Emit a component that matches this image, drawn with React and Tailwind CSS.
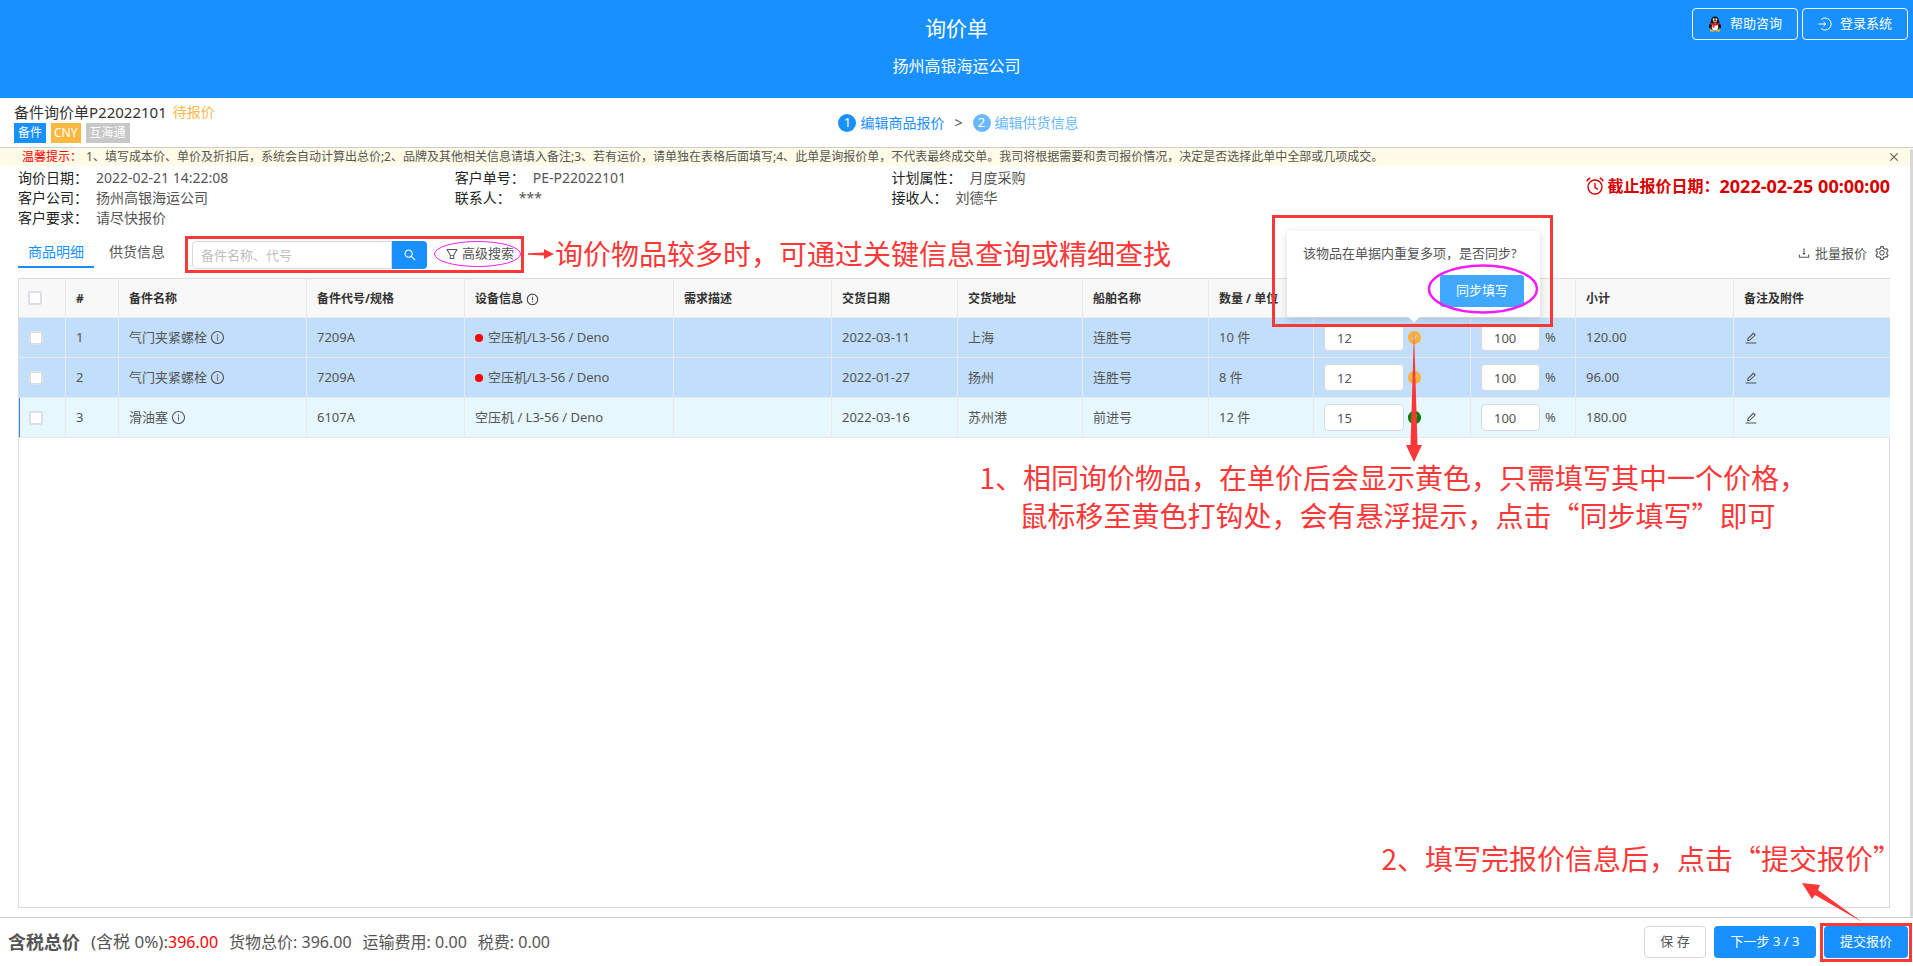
import React from "react";
import {
  AiOutlineSearch, AiOutlineFilter, AiOutlineSetting, AiOutlineEdit, AiOutlineInfoCircle,
  AiOutlineExclamationCircle, AiFillCheckCircle, AiOutlineDownload, AiOutlineClose,
} from "react-icons/ai";

const BODY_FONT = "font-['Noto_Sans','Noto_Sans_CJK_SC',sans-serif]";
const NOTE = "pointer-events-none whitespace-nowrap font-['Noto_Sans_CJK_SC',sans-serif] text-[28px] leading-[38px] text-[#fb3838]";

const ROWS = [
  { name: "气门夹紧螺栓", code: "7209A", device: "空压机/L3-56 / Deno", dot: true, date: "2022-03-11", place: "上海", ship: "连胜号", qty: "10 件", price: "12", off: "100", sum: "120.00", same: true },
  { name: "气门夹紧螺栓", code: "7209A", device: "空压机/L3-56 / Deno", dot: true, date: "2022-01-27", place: "扬州", ship: "连胜号", qty: "8 件", price: "12", off: "100", sum: "96.00", same: true },
  { name: "滑油塞", code: "6107A", device: "空压机 / L3-56 / Deno", dot: false, date: "2022-03-16", place: "苏州港", ship: "前进号", qty: "12 件", price: "15", off: "100", sum: "180.00", same: false },
];

function Penguin() {
  return (
    <svg viewBox="0 0 28 32" className="h-4 w-3.5" aria-hidden="true">
      <ellipse cx="8.500" cy="29" rx="5" ry="2.500" fill="#f7b21b" />
      <ellipse cx="19.500" cy="29" rx="5" ry="2.500" fill="#f7b21b" />
      <path d="M14 1C8 1 6 6 6 11c-3 5-5 9-4 13 1 1 2 0 3-1 1 4 4 6 9 6s8-2 9-6c1 1 2 2 3 1 1-4-1-8-4-13 0-5-2-10-8-10z" fill="#111" />
      <ellipse cx="14" cy="22" rx="6.500" ry="7" fill="#fff" />
      <ellipse cx="11.300" cy="7" rx="1.800" ry="2.600" fill="#fff" />
      <ellipse cx="16.700" cy="7" rx="1.800" ry="2.600" fill="#fff" />
      <ellipse cx="14" cy="11.500" rx="4.500" ry="1.500" fill="#f7b21b" />
      <path d="M5 13c5 3 13 3 18 0l1 3c-3 2-7 3-11 3v4H9v-5c-2 0-4-1-5-2z" fill="#e6162d" />
    </svg>
  );
}

function LoginIcon() {
  return (
    <svg viewBox="0 0 14 14" className="h-3.5 w-3.5" fill="none" stroke="currentColor" aria-hidden="true">
      <path d="M3.200 2.500a6 6 0 1 1 0 9M0.500 7h7M5.500 4.800L7.800 7 5.500 9.200" />
    </svg>
  );
}

function AlarmIcon() {
  return (
    <svg viewBox="0 0 18 18" className="h-[18px] w-[18px]" fill="none" stroke="currentColor" strokeWidth="1.400" aria-hidden="true">
      <circle cx="9" cy="10" r="7" />
      <path d="M9 6v4.500l3 1.800M0.800 4.200Q1.500 2 4.200 1M17.200 4.200Q16.500 2 13.800 1" />
    </svg>
  );
}

function Info({ label, value }) {
  return (
    <div className="flex h-5 gap-2">
      <dt className="text-[#222]">{label}：</dt>
      <dd className="text-[#555]">{value}</dd>
    </div>
  );
}

function Check({ label }) {
  return (
    <input type="checkbox" aria-label={label} className="block h-3.5 w-3.5 appearance-none rounded-[2px] border-2 border-[#dcdfe6] bg-white" />
  );
}

function Popover() {
  return (
    <div className="absolute bottom-7 left-[-120px] z-10 w-[253px] rounded bg-white px-4 pt-3 pb-2.5 text-[13px] shadow-[0_2px_8px_rgba(0,0,0,0.15)]">
      <p className="leading-5 whitespace-nowrap text-[#555]">该物品在单据内重复多项，是否同步?</p>
      <div className="mt-3 flex justify-end">
        <button type="button" className="h-8 w-[84px] rounded-[3px] bg-[#40a9ff] text-white">同步填写</button>
      </div>
      <div className="absolute -bottom-1 left-[123px] h-2 w-2 rotate-45 bg-white" />
      <svg viewBox="0 0 112 50" className="absolute top-[33px] right-px h-[50px] w-28" aria-hidden="true">
        <ellipse cx="56" cy="25" rx="54" ry="23.500" fill="none" stroke="#f31cf3" strokeWidth="2.500" />
      </svg>
      <div className="absolute -inset-x-[15px] -top-4 h-28 w-[281px] border-[3px] border-[#fb3838]" />
      <svg viewBox="0 0 16 132" className="absolute top-[99px] left-[119px] h-[132px] w-4" aria-hidden="true">
        <path d="M8 0L11.500 115H16L8 132L0 115H4.500z" fill="#fb3838" />
      </svg>
    </div>
  );
}

const COLS = [
  "w-[46px]", "w-[53px]", "w-[188px]", "w-[158px]", "w-[209px]", "w-[158px]", "w-[126px]",
  "w-[125px]", "w-[126px]", "w-[105px]", "w-[157px]", "w-[105px]", "w-[158px]", "w-[157px]",
];
const HEADS = ["#", "备件名称", "备件代号/规格", "设备信息", "需求描述", "交货日期", "交货地址", "船舶名称", "数量 / 单位", "单价", "折扣", "小计", "备注及附件"];
const FIELD = "h-[27px] rounded border border-[#d9d9d9] bg-white pl-3 text-[13px] text-[#555]";

export default function App() {
  return (
    <div className={`flex h-screen flex-col bg-white text-[#555] ${BODY_FONT}`}>
      <header className="relative flex h-[98px] shrink-0 flex-col items-center bg-[#1890ff] text-white">
        <h1 className="mt-3 text-[21px] leading-8">询价单</h1>
        <p className="mt-2.5 text-base leading-6">扬州高银海运公司</p>
        <nav className="absolute top-2 right-[5px] flex gap-1 text-[13px]">
          <button type="button" className="flex h-8 items-center gap-2 rounded border border-white px-[15px]"><Penguin />帮助咨询</button>
          <button type="button" className="flex h-8 items-center gap-2 rounded border border-white px-[15px]"><LoginIcon />登录系统</button>
        </nav>
      </header>

      <section className="grid h-[50px] shrink-0 grid-cols-[1fr_auto_1fr] border-b border-[#ccc]">
        <div className="pt-1 pl-3.5">
          <div className="flex items-center gap-1.5 text-[15px] leading-5">
            <h2 className="text-[#333]">备件询价单P22022101</h2>
            <span className="text-sm leading-5 text-[#f8b84a]">待报价</span>
          </div>
          <div className="mt-px flex gap-[5px] text-xs leading-5 text-white">
            <span className="bg-[#1890ff] px-1">备件</span>
            <span className="bg-[#f9b83f] px-[3px]">CNY</span>
            <span className="bg-[#c8c8c8] px-1">互海通</span>
          </div>
        </div>
        <ol className="ml-1 flex items-center text-sm">
          <li className="flex items-center gap-1 text-[#1890ff]">
            <span className="flex h-[18px] w-[18px] items-center justify-center rounded-full bg-[#1890ff] text-[13px] text-white">1</span>编辑商品报价
          </li>
          <li aria-hidden="true" className="px-2.5">&gt;</li>
          <li className="flex items-center gap-1 text-[#69b8ff]">
            <span className="flex h-[18px] w-[18px] items-center justify-center rounded-full bg-[#69b8ff] text-[13px] text-white">2</span>编辑供货信息
          </li>
        </ol>
      </section>

      <main className="flex min-h-0 grow">
        <div className="flex min-w-0 grow flex-col">
          <div className="flex h-[18px] shrink-0 items-center bg-[#fffbe6] pr-2.5 pl-[22px] text-xs">
            <strong className="font-normal text-[#f00]">温馨提示：</strong>
            <p className="ml-1 grow">1、填写成本价、单价及折扣后，系统会自动计算出总价;2、品牌及其他相关信息请填入备注;3、若有运价，请单独在表格后面填写;4、此单是询报价单，不代表最终成交单。我司将根据需要和贵司报价情况，决定是否选择此单中全部或几项成交。</p>
            <button type="button" aria-label="关闭"><AiOutlineClose className="h-3 w-3" /></button>
          </div>

          <div className="flex shrink-0 justify-between pt-0.5 pr-5 pl-[18px] text-sm leading-5">
            <dl className="grid w-[70%] grid-cols-3">
              <Info label="询价日期" value="2022-02-21 14:22:08" />
              <Info label="客户单号" value="PE-P22022101" />
              <Info label="计划属性" value="月度采购" />
              <Info label="客户公司" value="扬州高银海运公司" />
              <Info label="联系人" value="***" />
              <Info label="接收人" value="刘德华" />
              <Info label="客户要求" value="请尽快报价" />
            </dl>
            <p className="flex h-9 items-center text-base font-bold text-[#d60000]">
              <AlarmIcon />
              <span className="ml-1">截止报价日期：</span>
              <time className="text-lg">2022-02-25 00:00:00</time>
            </p>
          </div>

          <div className="flex h-[50px] shrink-0 items-start justify-between pr-5 pl-[18px]">
            <div className="flex items-start">
              <div role="tablist" className="flex gap-[5px] text-sm">
                <button type="button" role="tab" aria-selected="true" className="mt-2.5 h-[30px] border-b-2 border-[#1890ff] px-2.5 text-[#1890ff]">商品明细</button>
                <button type="button" role="tab" aria-selected="false" className="mt-2.5 h-[30px] border-b-2 border-transparent px-2.5">供货信息</button>
              </div>
              <div className="mt-2 ml-2.5 flex h-[37px] w-[339px] shrink-0 items-start border-[3px] border-[#fb3838] pt-0.5 pl-1 text-[13px]">
                <input type="text" aria-label="备件名称、代号" placeholder="备件名称、代号" className="h-7 w-[200px] rounded-l border border-[#d9d9d9] pl-2 outline-none placeholder:text-[#bfbfbf]" />
                <button type="button" aria-label="搜索" className="flex h-7 w-[35px] items-center justify-center rounded-r bg-[#1890ff] text-white"><AiOutlineSearch className="h-3.5 w-3.5" /></button>
                <div className="relative ml-[7px] flex h-[26px] w-[87px] items-center justify-center pl-1">
                  <button type="button" className="flex items-center gap-[3px] whitespace-nowrap"><AiOutlineFilter className="h-3.5 w-3.5" />高级搜索</button>
                  <svg viewBox="0 0 87 26" className="pointer-events-none absolute inset-0" aria-hidden="true"><ellipse cx="43.500" cy="13" rx="43" ry="12.500" fill="none" stroke="#f31cf3" /></svg>
                </div>
              </div>
              <svg viewBox="0 0 26 12" className="mt-5 ml-1 h-3 w-[26px]" aria-hidden="true"><path d="M0 5.300L16 4.500V1L26 6L16 11V7.500L0 6.700z" fill="#fb3838" /></svg>
              <p className={`mt-1.5 ml-px ${NOTE}`}>询价物品较多时，可通过关键信息查询或精细查找</p>
            </div>
            <div className="mt-[15px] flex items-center gap-[7px] text-[13px] leading-5">
              <button type="button" className="flex items-center gap-1"><AiOutlineDownload className="h-3.5 w-3.5" />批量报价</button>
              <button type="button" aria-label="设置"><AiOutlineSetting className="h-4 w-4" /></button>
            </div>
          </div>

          <div className="mr-5 mb-[9px] ml-[18px] flex grow flex-col border border-[#dcdcdc]">
            <table className="w-full table-fixed border-separate border-spacing-0 text-[13px]">
              <colgroup>{COLS.map((c, i) => <col key={i} className={c} />)}</colgroup>
              <thead>
                <tr className="h-[39px] bg-[#f8f8f8] text-left text-xs text-[#333]">
                  <th className="border-b border-[#e8e8e8] pl-[9px]"><Check label="全选" /></th>
                  {HEADS.map((h) => (
                    <th key={h} className="border-b border-l border-[#e8e8e8] pt-0.5 pl-2.5 font-bold whitespace-nowrap">
                      {h === "设备信息" ? <span className="flex items-center gap-[3px]">{h}<AiOutlineExclamationCircle className="h-[13px] w-[13px]" /></span> : h}
                    </th>
                  ))}
                </tr>
              </thead>
              <tbody>
                {ROWS.map((r, i) => (
                  <tr key={i} className={`h-10 [&>td]:border-b [&>td]:border-[#e8e8e8] [&>td+td]:border-l [&>td]:pl-2.5 ${r.same ? "bg-[#c1defb]" : "bg-[#e6f7ff]"}`}>
                    <td className={r.same ? "" : "shadow-[inset_1px_0_0_#3f83d8]"}><Check label={`选择第${i + 1}行`} /></td>
                    <td>{i + 1}</td>
                    <td><span className="flex items-center gap-[3px]">{r.name}<AiOutlineInfoCircle className="h-[15px] w-[15px]" /></span></td>
                    <td>{r.code}</td>
                    <td><span className="flex items-center gap-[5px]">{r.dot && <i className="h-2 w-2 rounded-full bg-[#f00]" />}{r.device}</span></td>
                    <td></td>
                    <td>{r.date}</td>
                    <td>{r.place}</td>
                    <td>{r.ship}</td>
                    <td>{r.qty}</td>
                    <td>
                      <div className="flex items-center gap-[3px]">
                        <input aria-label={`单价 ${i + 1}`} defaultValue={r.price} className={`w-20 ${FIELD}`} />
                        <span className="relative">
                          <AiFillCheckCircle className={`h-[15px] w-[15px] ${r.same ? "text-[#fbb03f]" : "text-[#008000]"}`} />
                          {i === 0 && <Popover />}
                        </span>
                      </div>
                    </td>
                    <td>
                      <label className="flex items-center gap-[5px]">
                        <input aria-label={`折扣 ${i + 1}`} defaultValue={r.off} className={`w-[59px] ${FIELD}`} />%
                      </label>
                    </td>
                    <td>{r.sum}</td>
                    <td><button type="button" aria-label="编辑备注" className="block"><AiOutlineEdit className="h-3.5 w-3.5" /></button></td>
                  </tr>
                ))}
              </tbody>
            </table>
            <div className={`mt-5 mr-[82px] self-end ${NOTE}`}>
              <p>1、相同询价物品，在单价后会显示黄色，只需填写其中一个价格，</p>
              <p className="pl-10">鼠标移至黄色打钩处，会有悬浮提示，点击“同步填写”即可</p>
            </div>
            <p className={`mt-auto -mr-3 mb-[30px] self-end ${NOTE}`}>2、填写完报价信息后，点击“提交报价”</p>
          </div>
        </div>
        <div className="mt-px w-[3px] shrink-0 rounded-full bg-[#d8d8d8]" />
      </main>

      <footer className="relative flex h-[49px] shrink-0 items-center justify-between border-t border-[#ccc] pr-px pl-2">
        <div className="flex items-center gap-[11px] text-base">
          <strong className="text-lg">含税总价</strong>
          <span><span className="text-[17px]">(含税 0%):</span><span className="text-[#f00]">396.00</span></span>
          <span>货物总价: 396.00</span>
          <span>运输费用: 0.00</span>
          <span>税费: 0.00</span>
        </div>
        <div className="flex items-center text-[13px]">
          <button type="button" className="h-8 w-[62px] rounded border border-[#d9d9d9] bg-white">保 存</button>
          <button type="button" className="ml-2 h-8 w-[102px] rounded bg-[#1890ff] text-white">下一步 3 / 3</button>
          <div className="ml-1 flex h-[39px] w-[92px] items-center justify-center border-[3px] border-[#fb3838]">
            <button type="button" className="h-8 w-[84px] rounded bg-[#1890ff] text-white">提交报价</button>
          </div>
        </div>
        <svg viewBox="0 0 60 40" className="absolute -top-9 right-[51px] h-10 w-[60px]" aria-hidden="true">
          <path d="M0 1L18 3L16 8L60 40L13 13L10 17z" fill="#fb3838" />
        </svg>
      </footer>
    </div>
  );
}
